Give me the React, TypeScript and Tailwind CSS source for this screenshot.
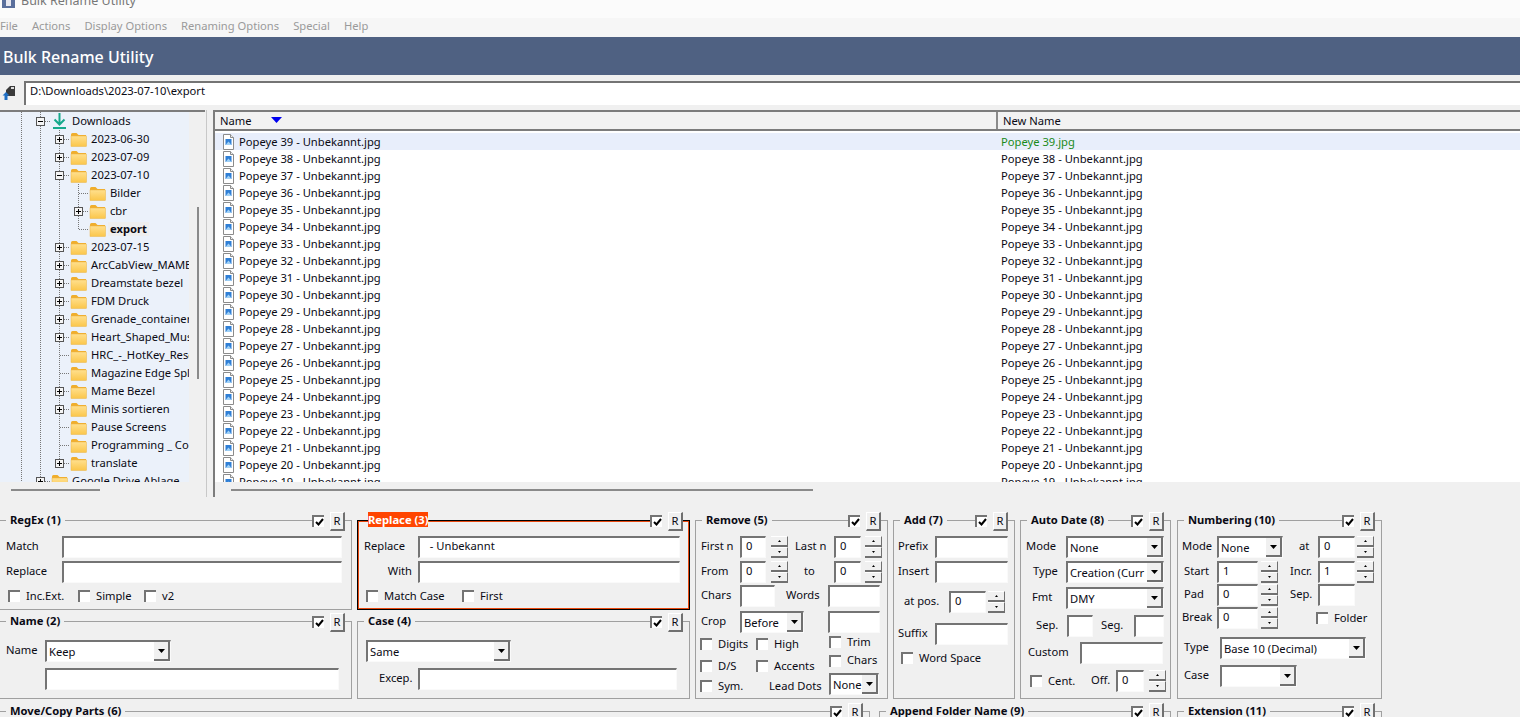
import React from 'react';

const TREE = [
  { name: 'Downloads', level: 1, box: '-', icon: 'down' },
  { name: '2023-06-30', level: 2, box: '+' },
  { name: '2023-07-09', level: 2, box: '+' },
  { name: '2023-07-10', level: 2, box: '-' },
  { name: 'Bilder', level: 3 },
  { name: 'cbr', level: 3, box: '+' },
  { name: 'export', level: 3, last: true, bold: true },
  { name: '2023-07-15', level: 2, box: '+' },
  { name: 'ArcCabView_MAME_Artwork', level: 2, box: '+' },
  { name: 'Dreamstate bezel', level: 2, box: '+' },
  { name: 'FDM Druck', level: 2, box: '+' },
  { name: 'Grenade_containers', level: 2, box: '+' },
  { name: 'Heart_Shaped_Music_Box', level: 2, box: '+' },
  { name: 'HRC_-_HotKey_Resolution', level: 2 },
  { name: 'Magazine Edge Splitter', level: 2 },
  { name: 'Mame Bezel', level: 2, box: '+' },
  { name: 'Minis sortieren', level: 2, box: '+' },
  { name: 'Pause Screens', level: 2 },
  { name: 'Programming _ Code', level: 2 },
  { name: 'translate', level: 2, box: '+', last: true },
  { name: 'Google Drive Ablage', level: 1, box: '+' },
];

const FILES = Array.from({ length: 21 }, (_, i) => 39 - i);

const Cell = ({ v, stop, h, box }: { v?: boolean; stop?: boolean; h?: boolean; box?: string }) => (
  <svg width="19" height="18" className="shrink-0 block" shapeRendering="crispEdges">
    {v && <line x1="9.5" y1="0" x2="9.5" y2="18" stroke="#777" strokeDasharray="1 1" />}
    {stop && <line x1="9.5" y1="0" x2="9.5" y2="9" stroke="#777" strokeDasharray="1 1" />}
    {(h || box) && <line x1="10" y1="9.5" x2="19" y2="9.5" stroke="#777" strokeDasharray="1 1" />}
    {box && (
      <g>
        <rect x="5.5" y="5.5" width="8" height="8" fill="#f4f4f4" stroke="#555" />
        <line x1="7" y1="9.5" x2="12" y2="9.5" stroke="#000" />
        {box === '+' && <line x1="9.5" y1="7" x2="9.5" y2="12" stroke="#000" />}
      </g>
    )}
  </svg>
);

const Folder = () => (
  <svg width="17" height="15" viewBox="0 0 17 15" className="shrink-0">
    <defs>
      <linearGradient id="folderFill" x1="0" y1="0" x2="0" y2="1">
        <stop offset="0" stopColor="#ffe08e" />
        <stop offset="1" stopColor="#fbc64a" />
      </linearGradient>
    </defs>
    <path d="M1 2.5 Q1 1 2.5 1 H6.5 L8.5 3 H16 V4 H1 Z" fill="#f0ae2c" />
    <rect x="1" y="4" width="15.5" height="10.5" fill="url(#folderFill)" stroke="#eab54a" strokeWidth="0.5" />
  </svg>
);

const DownArrow = () => (
  <svg width="17" height="18" viewBox="0 0 17 18" className="shrink-0">
    <path d="M8.5 1 V12 M3.5 7.5 L8.5 12.5 L13.5 7.5" fill="none" stroke="#17a98c" strokeWidth="2" />
    <rect x="2" y="15" width="13" height="2" fill="#17a98c" />
  </svg>
);

const FileIcon = () => (
  <svg width="13" height="16" viewBox="0 0 13 16" className="shrink-0">
    <path d="M1.5 0.5 H8.5 L11.5 3.5 V15.5 H1.5 Z" fill="#fff" stroke="#8b8b8b" />
    <path d="M8.5 0.5 V3.5 H11.5" fill="#eee" stroke="#8b8b8b" />
    <rect x="3.5" y="5" width="6" height="6" fill="#2f7fd6" />
    <path d="M3.5 11 L6.5 7.5 L9.5 11 Z" fill="#9fd0f5" />
  </svg>
);

const TreeRow = ({ row }: { row: any }) => {
  const guide34 = row.level === 3;
  return (
    <div className="flex items-center h-[18px] pl-[12px] whitespace-nowrap">
      <Cell v />
      {row.level === 1 ? <Cell v box={row.box} /> : <Cell v />}
      {row.level === 2 && (row.last ? <Cell stop h box={row.box} /> : <Cell v h box={row.box} />)}
      {guide34 && <Cell v />}
      {guide34 && (row.last ? <Cell stop h /> : <Cell v h box={row.box} />)}
      <div className="ml-px mr-[4px] flex items-center">{row.icon === 'down' ? <DownArrow /> : <Folder />}</div>
      <span className={row.bold ? 'font-bold bg-[#eeeeee] -mx-[2px] px-[2px]' : ''}>{row.name}</span>
    </div>
  );
};

const Input = ({ w, value = '' }: { w: string; value?: string }) => (
  <div className={`${w} h-[22px] shrink-0 bg-white border-t-2 border-l-2 border-t-[#747474] border-l-[#747474] border-b border-r border-b-[#fafafa] border-r-[#fafafa] pl-[4px] leading-[16px] whitespace-pre overflow-hidden`}>
    {value}
  </div>
);

const Arrow = () => (
  <svg width="7" height="4" viewBox="0 0 7 4"><path d="M0 0 H7 L3.5 4 Z" fill="#000" /></svg>
);

const Combo = ({ w, value = '' }: { w: string; value?: string }) => (
  <div className={`${w} h-[22px] shrink-0 flex bg-white border-t-2 border-l-2 border-t-[#747474] border-l-[#747474] border-b border-r border-b-[#fafafa] border-r-[#fafafa]`}>
    <div className="flex-1 min-w-0 pl-[2px] leading-[19px] whitespace-nowrap overflow-hidden">{value}</div>
    <div className="w-[16px] shrink-0 flex items-center justify-center bg-[#f0f0f0] border-b-2 border-r-2 border-b-[#707070] border-r-[#707070]"><Arrow /></div>
  </div>
);

const SpinBtn = ({ up }: { up?: boolean }) => (
  <div className="h-[11px] w-[17px] flex items-center justify-center bg-[#f0f0f0] border-t border-t-white border-b-2 border-r border-b-[#707070] border-r-[#707070]">
    <svg width="3" height="2" viewBox="0 0 3 2"><path d={up ? 'M0 2 H3 L1.5 0 Z' : 'M0 0 H3 L1.5 2 Z'} fill="#000" /></svg>
  </div>
);

const Spin = ({ cls = '' }: { cls?: string }) => (
  <div className={`flex flex-col shrink-0 ${cls}`}>
    <SpinBtn up />
    <SpinBtn />
  </div>
);

const Box = ({ checked }: { checked?: boolean }) => (
  <div className="w-[12px] h-[12px] shrink-0 bg-white border-t-2 border-l-2 border-t-[#747474] border-l-[#747474] flex items-center justify-center">
    {checked && (
      <svg width="9" height="8" viewBox="0 0 9 8"><path d="M1 4 L3.5 6.5 L8 1" fill="none" stroke="#000" strokeWidth="2" /></svg>
    )}
  </div>
);

const Check = ({ label, cls = '' }: { label: string; cls?: string }) => (
  <div className={`flex items-center gap-[6px] shrink-0 ${cls}`}>
    <Box />
    <span className="-mt-px">{label}</span>
  </div>
);

const Panel = ({ title, cls, active, noLeft, pad = 'pl-[10px]', children }: { title: string; cls: string; active?: boolean; noLeft?: boolean; pad?: string; children?: React.ReactNode }) => (
  <div className={`${cls} shrink-0 border ${active ? 'border-black shadow-[inset_0_0_0_1px_#e8480f]' : 'border-[#a0a0a0]'} ${noLeft ? 'border-l-0' : ''}`}>
    <div className={`-mt-[10px] h-[20px] flex items-center justify-between pr-[6px] ${pad}`}>
      <span className={`font-bold leading-[15px] -mt-[4px] ${active ? 'bg-[#ff4500] text-white' : 'bg-[#f0f0f0] px-[4px]'}`}>{title}</span>
      <div className="flex items-center gap-[6px] bg-[#f0f0f0]">
        <Box checked />
        <div className="w-[15px] h-[19px] bg-[#f0f0f0] border-t border-l border-t-white border-l-white border-b-2 border-r-2 border-b-[#707070] border-r-[#707070] text-center leading-[15px]">R</div>
      </div>
    </div>
    {children}
  </div>
);

const Row = ({ cls = '', children }: { cls?: string; children: React.ReactNode }) => (
  <div className={`flex items-center h-[22px] ${cls}`}>{children}</div>
);

const L = ({ w, cls = '', children }: { w: string; cls?: string; children: React.ReactNode }) => (
  <span className={`${w} shrink-0 whitespace-nowrap -mt-[2px] ${cls}`}>{children}</span>
);

const RegExPanel = () => (
  <Panel title="RegEx (1)" cls="w-[352px] h-[90px]" noLeft pad="pl-[6px]">
    <div className="pl-[6px] pt-[5px]">
      <Row><L w="w-[56px]">Match</L><Input w="w-[280px]" /></Row>
      <Row cls="mt-[3px]"><L w="w-[56px]">Replace</L><Input w="w-[280px]" /></Row>
      <div className="flex items-center h-[20px] mt-[3px] pl-[2px]">
        <Check label="Inc.Ext." cls="w-[70px]" />
        <Check label="Simple" cls="w-[66px]" />
        <Check label="v2" />
      </div>
    </div>
  </Panel>
);

const NamePanel = () => (
  <Panel title="Name (2)" cls="w-[352px] h-[78px] mt-[11px]" noLeft pad="pl-[6px]">
    <div className="pl-[6px] pt-[8px]">
      <Row><L w="w-[39px]">Name</L><Combo w="w-[126px]" value="Keep" /></Row>
      <Row cls="mt-[6px] pl-[39px]"><Input w="w-[294px]" /></Row>
    </div>
  </Panel>
);

const ReplacePanel = () => (
  <Panel title="Replace (3)" cls="w-[333px] h-[90px]" active>
    <div className="pl-[6px] pt-[5px]">
      <Row><L w="w-[54px]">Replace</L><Input w="w-[262px]" value="  - Unbekannt" /></Row>
      <Row cls="mt-[3px]"><L w="w-[48px]" cls="mr-[6px] text-right">With</L><Input w="w-[262px]" /></Row>
      <div className="flex items-center h-[20px] mt-[3px] pl-[2px]">
        <Check label="Match Case" cls="w-[96px]" />
        <Check label="First" />
      </div>
    </div>
  </Panel>
);

const CasePanel = () => (
  <Panel title="Case (4)" cls="w-[333px] h-[78px] mt-[11px]" pad="pl-[6px]">
    <div className="pt-[8px]">
      <Row cls="pl-[8px]"><Combo w="w-[145px]" value="Same" /></Row>
      <Row cls="mt-[6px] pl-[21px]"><L w="w-[39px]">Excep.</L><Input w="w-[259px]" /></Row>
    </div>
  </Panel>
);

const RemovePanel = () => (
  <Panel title="Remove (5)" cls="w-[193px] h-[179px] ml-[5px]" pad="pl-[6px]">
    <div className="pl-[5px] pt-[5px]">
      <Row>
        <L w="w-[39px]">First n</L><Input w="w-[26px]" value="0" /><Spin cls="ml-[5px]" />
        <L w="w-[46px]" cls="pl-[7px]">Last n</L><Input w="w-[27px]" value="0" /><Spin cls="ml-[4px]" />
      </Row>
      <Row cls="mt-[3px]">
        <L w="w-[39px]">From</L><Input w="w-[26px]" value="0" /><Spin cls="ml-[5px]" />
        <L w="w-[46px]" cls="pl-[16px]">to</L><Input w="w-[27px]" value="0" /><Spin cls="ml-[4px]" />
      </Row>
      <Row cls="mt-[2px]">
        <L w="w-[39px]">Chars</L><Input w="w-[35px]" />
        <L w="w-[42px]" cls="ml-[11px]">Words</L><Input w="w-[52px]" />
      </Row>
      <Row cls="mt-[4px]">
        <L w="w-[39px]">Crop</L><Combo w="w-[64px]" value="Before" />
        <div className="ml-[24px]"><Input w="w-[52px]" /></div>
      </Row>
      <div className="flex -ml-px">
        <div className="w-[129px] shrink-0 pt-px">
          <div className="flex items-center h-[20px]"><Check label="Digits" cls="w-[56px]" /><Check label="High" /></div>
          <div className="flex items-center h-[20px] mt-[2px]"><Check label="D/S" cls="w-[56px]" /><Check label="Accents" /></div>
          <div className="flex items-center h-[20px]"><Check label="Sym." cls="w-[69px]" /><span className="-mt-px">Lead Dots</span></div>
        </div>
        <div>
          <div className="flex items-center h-[18px]"><Check label="Trim" /></div>
          <div className="flex items-center h-[19px]"><Check label="Chars" /></div>
          <div className="mt-[3px]"><Combo w="w-[50px]" value="None" /></div>
        </div>
      </div>
    </div>
  </Panel>
);

const AddPanel = () => (
  <Panel title="Add (7)" cls="w-[122px] h-[179px] ml-[5px]" pad="pl-[6px]">
    <div className="pl-[4px] pt-[5px]">
      <Row><L w="w-[37px]">Prefix</L><Input w="w-[73px]" /></Row>
      <Row cls="mt-[3px]"><L w="w-[37px]">Insert</L><Input w="w-[73px]" /></Row>
      <Row cls="mt-[8px]"><L w="w-[51px]" cls="pl-[6px]">at pos.</L><Input w="w-[37px]" value="0" /><Spin cls="ml-[2px]" /></Row>
      <Row cls="mt-[10px]"><L w="w-[37px]">Suffix</L><Input w="w-[73px]" /></Row>
      <div className="flex items-center h-[20px] mt-[3px] pl-[3px]"><Check label="Word Space" /></div>
    </div>
  </Panel>
);

const AutoDatePanel = () => (
  <Panel title="Auto Date (8)" cls="w-[151px] h-[179px] ml-[5px]" pad="pl-[6px]">
    <div className="pl-[5px] pt-[5px]">
      <Row><L w="w-[40px]">Mode</L><Combo w="w-[98px]" value="None" /></Row>
      <Row cls="mt-[3px]"><L w="w-[40px]" cls="pl-[7px]">Type</L><Combo w="w-[98px]" value="Creation (Curr" /></Row>
      <Row cls="mt-[4px]"><L w="w-[40px]" cls="pl-[6px]">Fmt</L><Combo w="w-[98px]" value="DMY" /></Row>
      <Row cls="mt-[6px]">
        <L w="w-[41px]" cls="pl-[10px]">Sep.</L><Input w="w-[26px]" />
        <L w="w-[33px]" cls="ml-[8px]">Seg.</L><Input w="w-[30px]" />
      </Row>
      <Row cls="mt-[5px]"><L w="w-[54px]" cls="pl-[2px]">Custom</L><Input w="w-[83px]" /></Row>
      <Row cls="mt-[6px]">
        <Check label="Cent." cls="w-[61px] ml-[4px]" />
        <L w="w-[25px]">Off.</L><Input w="w-[28px]" value="0" /><Spin cls="ml-[5px]" />
      </Row>
    </div>
  </Panel>
);

const NumberingPanel = () => (
  <Panel title="Numbering (10)" cls="w-[205px] h-[179px] ml-[6px]" pad="pl-[6px]">
    <div className="pl-[4px] pt-[5px]">
      <Row>
        <L w="w-[35px]">Mode</L><Combo w="w-[66px]" value="None" />
        <L w="w-[19px]" cls="ml-[16px]">at</L><Input w="w-[37px]" value="0" /><Spin cls="ml-[2px]" />
      </Row>
      <Row cls="mt-[3px]">
        <L w="w-[35px]" cls="pl-[2px]">Start</L><Input w="w-[41px]" value="1" /><Spin cls="ml-[3px]" />
        <L w="w-[28px]" cls="ml-[12px]">Incr.</L><Input w="w-[37px]" value="1" /><Spin cls="ml-[2px]" />
      </Row>
      <Row cls="mt-px">
        <L w="w-[35px]" cls="pl-[2px]">Pad</L><Input w="w-[41px]" value="0" /><Spin cls="ml-[3px]" />
        <L w="w-[28px]" cls="ml-[12px]">Sep.</L><Input w="w-[37px]" />
      </Row>
      <Row cls="mt-px">
        <L w="w-[35px]">Break</L><Input w="w-[41px]" value="0" /><Spin cls="ml-[3px]" />
        <Check label="Folder" cls="ml-[38px]" />
      </Row>
      <Row cls="mt-[8px]"><L w="w-[38px]" cls="pl-[2px]">Type</L><Combo w="w-[146px]" value="Base 10 (Decimal)" /></Row>
      <Row cls="mt-[6px]"><L w="w-[38px]" cls="pl-[2px]">Case</L><Combo w="w-[77px]" /></Row>
    </div>
  </Panel>
);

export default function App() {
  return (
    <div className="w-[1520px] h-[717px] overflow-hidden flex flex-col bg-[#f0f0f0] text-[11.2px] leading-[14px] text-[#0a0a14] font-['Noto_Sans',sans-serif]">
      {/* window title, cut off by the top of the capture */}
      <div className="h-[18px] bg-[#fbfbfb] flex items-start pl-[2px] text-[#777] text-[12.5px] overflow-hidden">
        <svg width="13" height="9" viewBox="0 0 13 9" className="shrink-0"><rect x="0" y="0" width="13" height="8" fill="#5a6f9c" /><rect x="4" y="0" width="5" height="6" fill="#e8e8f0" /></svg>
        <span className="ml-[6px] -mt-[6px]">Bulk Rename Utility</span>
      </div>
      <div className="h-[19px] bg-[#f6f6f6] flex items-center gap-[14px] pb-[3px] text-[#9a9a9a]">
        <span>File</span>
        <span>Actions</span>
        <span>Display Options</span>
        <span>Renaming Options</span>
        <span>Special</span>
        <span>Help</span>
      </div>
      <div className="h-[38px] bg-[#4f6182] flex items-center pl-[3px] pt-px text-white text-[16px] font-medium">Bulk Rename Utility</div>

      <div className="h-[35px] flex items-center pl-[2px]">
        <svg width="13" height="15" viewBox="0 0 13 15" className="shrink-0">
          <path d="M4 5 L8 1 H13 V11 H4 Z" fill="#3a3a3a" />
          <rect x="9" y="2" width="3" height="2" fill="#ddd" />
          <path d="M4 7 L7.5 10.5 H5.5 V15 H2.5 V10.5 H0.5 Z" fill="#1f6fc4" />
        </svg>
        <div className="ml-[9px] flex-1 h-[24px] bg-white border-t-2 border-l-2 border-t-[#747474] border-l-[#747474] pl-[4px] leading-[16px]">D:\Downloads\2023-07-10\export</div>
      </div>

      <div className="h-[390px] flex">
        <div className="w-[207px] h-[387px] shrink-0 flex flex-col border-r border-r-[#c8c8c8]">
          <div className="h-[2px] mr-px bg-[#7c7c7c] shrink-0" />
          <div className="h-[370px] flex shrink-0">
            <div className="w-[189px] bg-[#ebf1fa] overflow-hidden shrink-0">
              {TREE.map(row => <TreeRow key={row.name} row={row} />)}
            </div>
            <div className="flex-1 pt-[95px] pl-[8px]"><div className="w-[2px] h-[172px] bg-[#8a8a8a]" /></div>
          </div>
          <div className="flex-1 flex items-center pl-[11px]"><div className="w-[89px] h-[2px] bg-[#8a8a8a]" /></div>
        </div>

        <div className="ml-[6px] flex-1 h-[387px] flex flex-col border-l-2 border-t-2 border-l-[#7c7c7c] border-t-[#7c7c7c]">
          <div className="h-[19px] shrink-0 flex items-center border-b-2 border-b-[#7c7c7c] bg-[#f2f2f2]">
            <div className="w-[783px] h-full shrink-0 flex items-center pl-[5px] border-r-2 border-r-[#8a8a8a]">
              <span className="pt-px">Name</span>
              <svg width="11" height="6" viewBox="0 0 11 6" className="ml-[19px] -mt-[2px]"><path d="M0 0 H11 L5.5 6 Z" fill="#0000f0" /></svg>
            </div>
            <span className="pl-[5px] pt-px">New Name</span>
          </div>
          <div className="h-[351px] shrink-0 pt-[2px] bg-white overflow-hidden">
            {FILES.map((n, i) => (
              <div key={n} className={`h-[17px] flex items-center whitespace-nowrap ${i === 0 ? 'bg-[#e8eefb]' : ''}`}>
                <div className="w-[786px] shrink-0 flex items-center pl-[7px] gap-[4px]">
                  <FileIcon />
                  <span>Popeye {n} - Unbekannt.jpg</span>
                </div>
                <span className={i === 0 ? 'text-[#1a8a1a]' : ''}>{i === 0 ? 'Popeye 39.jpg' : `Popeye ${n} - Unbekannt.jpg`}</span>
              </div>
            ))}
          </div>
          <div className="flex-1 flex items-center pl-[16px]"><div className="w-[582px] h-[2px] bg-[#8a8a8a]" /></div>
        </div>
      </div>

      <div className="flex-1 min-h-0 pt-[20px]">
        <div className="flex">
          <div className="flex flex-col shrink-0">
            <RegExPanel />
            <NamePanel />
          </div>
          <div className="flex flex-col shrink-0 ml-[5px]">
            <ReplacePanel />
            <CasePanel />
          </div>
          <RemovePanel />
          <AddPanel />
          <AutoDatePanel />
          <NumberingPanel />
        </div>
        <div className="flex mt-[12px]">
          <Panel title="Move/Copy Parts (6)" cls="w-[870px] h-[60px]" noLeft pad="pl-[6px]" />
          <Panel title="Append Folder Name (9)" cls="w-[292px] h-[60px] ml-[9px]" pad="pl-[6px]" />
          <Panel title="Extension (11)" cls="w-[205px] h-[60px] ml-[6px]" pad="pl-[6px]" />
        </div>
      </div>
    </div>
  );
}
